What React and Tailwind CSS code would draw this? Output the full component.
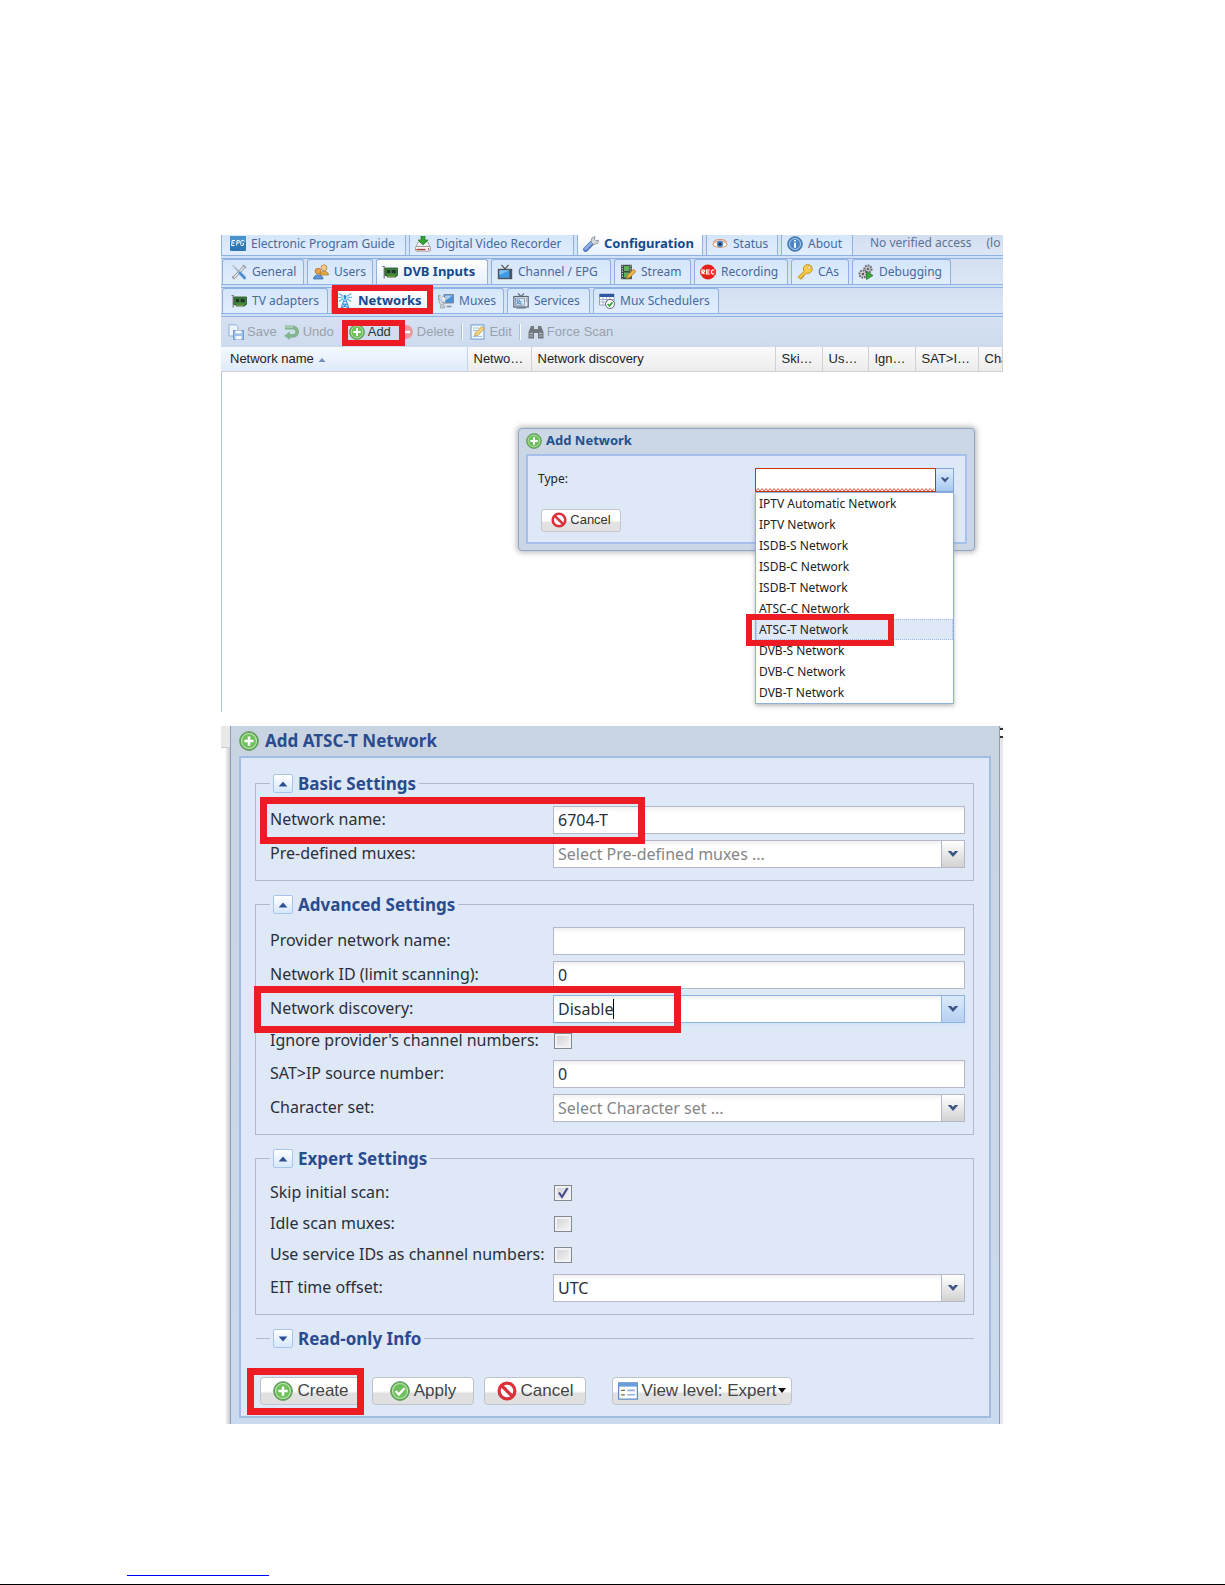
import React, { useState } from 'react';

const svg = (children) => function Icon({ className = 'w-4 h-4' }) {
  return (
    <svg viewBox="0 0 16 16" className={`shrink-0 ${className}`} aria-hidden="true">
      {children}
    </svg>
  );
};

const IconEpg = svg(<>
  <rect x="0" y="0" width="16" height="15" rx="1" fill="#2f78b8" />
  <rect x="0" y="0" width="16" height="6" rx="1" fill="#4a93cf" />
  <path d="M5 4.500H2.200L1.500 9.500h3M2 7h2.500M6.500 9.500l.7-5h2l.6 1.200-1 1.300H7M14.500 5.500l-1-1h-1.700l-.8 1-.4 3 .8 1h1.700l.6-2.200h-1.200" fill="none" stroke="#fff" strokeWidth="1" />
</>);
const IconDvr = svg(<>
  <path d="M1 11l2-5h10l2 5z" fill="#eceef0" stroke="#8b8f95" strokeWidth=".7" />
  <rect x=".6" y="10.500" width="14.800" height="4.600" rx=".8" fill="#f4f4f4" stroke="#888" strokeWidth=".8" />
  <path d="M1.500 13.500h9" stroke="#b03a3a" strokeWidth="1.300" />
  <path d="M13 13h1" stroke="#b22" strokeWidth="1.500" />
  <path d="M6 0h4v4h3L8 9 3 4h3z" fill="#35a435" stroke="#1d7a1d" strokeWidth=".7" />
</>);
const IconWrench = svg(<>
  <path d="M2.600 13.400L8.500 7.500" stroke="#5578bd" strokeWidth="5" strokeLinecap="round" />
  <path d="M2.500 12.900L8.200 7.200" stroke="#8fb0e6" strokeWidth="2.600" strokeLinecap="round" />
  <path d="M8 6L8.800 2.200 12 .5l-.4 2.900L13 4.900l2.800-.7L14.500 7.500 10.500 8.500z" fill="#d3d6db" stroke="#84898f" strokeWidth=".8" />
</>);
const IconEye = svg(<>
  <path d="M.8 8.500C3 4 13 4 15.200 8.500 13 12.500 3 12.500.8 8.500z" fill="#fff" stroke="#dba486" strokeWidth="1.200" />
  <circle cx="8" cy="8" r="3.200" fill="#4c83bd" />
  <circle cx="8" cy="8" r="1.500" fill="#16314f" />
  <path d="M1 6C4 2.500 12 2.500 15 6" fill="none" stroke="#d99170" />
</>);
const IconInfo = svg(<>
  <circle cx="8" cy="8" r="7.300" fill="#4b87c4" stroke="#2e659f" strokeWidth=".8" />
  <circle cx="8" cy="8" r="5.500" fill="none" stroke="#b8d4ee" strokeWidth=".9" />
  <path d="M8 4v1.600M8 6.800v5" stroke="#fff" strokeWidth="1.900" />
</>);
const IconTools = svg(<>
  <path d="M3 13.500L13 3" stroke="#8e9399" strokeWidth="3" strokeLinecap="round" />
  <path d="M3 13.500L13 3" stroke="#e8eaec" strokeWidth="1.500" strokeLinecap="round" />
  <path d="M12 1l3 3M1 12.500L3.500 15" stroke="#9ba0a6" strokeWidth="1.600" />
  <path d="M2 1.500L9 9" stroke="#9aa6b3" strokeWidth="1.300" />
  <path d="M9 9l4.500 4.800" stroke="#4f8fd0" strokeWidth="3" strokeLinecap="round" />
  <path d="M1 1l3 .8L5 4 3 4.500z" fill="#c5cad0" />
</>);
const IconUsers = svg(<>
  <circle cx="11" cy="3.800" r="3" fill="#f3c98b" stroke="#b27a2c" strokeWidth=".7" />
  <path d="M7 11c0-5 8.500-5 8.500 0z" fill="#e0a93c" stroke="#a9761d" strokeWidth=".7" />
  <circle cx="5" cy="7.200" r="2.900" fill="#e8a24c" stroke="#a9641d" strokeWidth=".7" />
  <path d="M.5 15c0-5.500 9.500-5.500 9.500 0z" fill="#5d97da" stroke="#2f62a0" strokeWidth=".7" />
</>);
const IconCard = svg(<>
  <path d="M.5 2.500h1.700v12" fill="none" stroke="#777" strokeWidth="1.200" />
  <path d="M3 4h12.500v7.500H14V13H5v-1.500H3z" fill="#3e8a3c" stroke="#1f4f20" strokeWidth=".8" />
  <path d="M4.800 5.800h3.500v3.500H4.800zM9.600 5.800h4.200v3.500H9.600z" fill="#23352a" />
  <path d="M5.500 12.300h8" stroke="#e0c14a" strokeWidth="1" strokeDasharray="1 1" />
</>);
const IconTv = svg(<>
  <path d="M4.500.8L8 5l3.500-4.200" fill="none" stroke="#555" strokeWidth="1.200" />
  <rect x=".8" y="4.800" width="14.400" height="10.400" fill="#4d5358" />
  <rect x="2.400" y="6.200" width="10" height="7.600" fill="#3f9be8" />
  <path d="M2.400 6.200h10L2.400 11z" fill="#7fc0f5" />
</>);
const IconStream = svg(<>
  <path d="M1 .8h11v14.400H1z" fill="#3c4a44" />
  <path d="M4 2h5.500v5H4zM4 8.500h5.500v5H4z" fill="#63b05c" />
  <path d="M2.300 1.500v13M10.900 1.500v13" stroke="#dfe4df" strokeWidth="1.100" strokeDasharray="1.300 1.200" />
  <path d="M6.500 15l1-3.700 6-6 2.300 2.200-6 6z" fill="#f0b545" stroke="#a86d18" strokeWidth=".8" />
</>);
const IconRec = svg(<>
  <circle cx="8" cy="8" r="7.600" fill="#e32119" />
  <path d="M0 5.400h16v5.200H0z" fill="#ee3a30" />
  <path d="M2 10V6h2l.5 1-.5 1H2l2.500 2M9.800 6H6.600v4h3.200M6.600 8h2.600M14.200 6h-1.700l-1 1v2l1 1h1.700" fill="none" stroke="#fff" strokeWidth="1.100" />
</>);
const IconKey = svg(<>
  <path d="M8 8.500L2 14.300" stroke="#bd8a17" strokeWidth="3.800" />
  <circle cx="10.800" cy="5" r="4.400" fill="#f7cf46" stroke="#bd8a17" strokeWidth=".9" />
  <path d="M8.500 8L2.300 14" stroke="#f7cf46" strokeWidth="2.200" />
  <circle cx="12.200" cy="3.600" r="1.400" fill="#fff" stroke="#bd8a17" strokeWidth=".6" />
  <path d="M4 13.500l1.500 1.300M5.500 12l1.600 1.400" stroke="#bd8a17" />
</>);
const IconDebug = svg(<>
  <circle cx="10" cy="5" r="3.600" fill="#bfc0c6" stroke="#6d6b75" strokeWidth="2" strokeDasharray="1.700 1" />
  <circle cx="5" cy="10" r="3.600" fill="#d0d1d6" stroke="#6d6b75" strokeWidth="2" strokeDasharray="1.700 1" />
  <circle cx="5" cy="10" r="1.200" fill="#555" />
  <circle cx="10" cy="5" r="1.100" fill="#555" />
  <path d="M8.500 7.500l6.500 4-6.500 4z" fill="#3aa83a" stroke="#1d6f1f" strokeWidth=".7" />
</>);
const IconMast = svg(<>
  <path d="M8 4L4 15.500M8 4l4 11.500M6.700 8.500h2.600M5.800 11l5.500 4M10.200 11l-5.500 4M5.800 11h4.400" fill="none" stroke="#3d9ade" strokeWidth="1.100" />
  <circle cx="8" cy="3.500" r="1.500" fill="#2c82c9" />
  <path d="M1.500.5L6 3M1 4.500l4.500-.3M2 8.500L6 5.500M14.500.5L10 3M15 4.500l-4.500-.3M14 8.500l-4-3" fill="none" stroke="#58b0ea" strokeWidth="1.100" />
</>);
const IconMux = svg(<>
  <path d="M6 1.500h9.500v8.500H6z" fill="#4a90d9" stroke="#7b8894" strokeWidth="1" />
  <path d="M7 2.500h7.500L7 8z" fill="#a5d0f5" />
  <path d="M8.500 13.500h5" stroke="#8a939c" strokeWidth="1.600" />
  <path d="M.5 2c0 4 2 7 6 8.500L3 12C1 10 0 5 .5 2z" fill="#dfe3e8" stroke="#8d949c" strokeWidth=".7" />
  <path d="M.8 2L6.500 10.500 8 5z" fill="#eef1f4" stroke="#9ba2aa" strokeWidth=".6" />
  <path d="M3 12l-1 3h5l-1.500-4" fill="#c6ccd3" stroke="#8d949c" strokeWidth=".6" />
</>);
const IconServices = svg(<>
  <path d="M5 .5L8 3.500l3-3" fill="none" stroke="#5c6a7a" strokeWidth="1.100" />
  <rect x=".8" y="3.500" width="14.400" height="10.500" fill="#e7ecf2" stroke="#596675" strokeWidth="1.200" />
  <rect x="2.600" y="5.200" width="9" height="7" fill="#d4e4f4" stroke="#70869e" strokeWidth=".7" />
  <path d="M4 6.500c0 3 2 4.500 4.500 4.500M6 6.500c0 1.500 1 2.500 2.500 2.500M3.500 11l3-2.500" fill="none" stroke="#2e6cae" />
  <path d="M13.300 5.500v4" stroke="#596675" strokeDasharray="1 1" />
  <path d="M3.500 15h9" stroke="#596675" />
</>);
const IconSched = svg(<>
  <path d="M.5 1h14.500v11H.5z" fill="#fff" stroke="#7b91b3" strokeWidth=".8" />
  <path d="M.5 1h14.500v3H.5z" fill="#2c55a4" />
  <path d="M1 6.500h14M1 9h14M4 4v8M7.500 4v8M11 4v8" stroke="#8fa5c6" strokeWidth=".8" />
  <circle cx="11" cy="11" r="4.500" fill="#fff" stroke="#667" strokeWidth="1" />
  <path d="M8.800 11l1.800 2 2.800-3.800" fill="none" stroke="#34a534" strokeWidth="1.700" />
</>);
const IconSave = svg(<>
  <path d="M1 .8h7l2 2V12H1z" fill="#eef5fc" stroke="#8fb0d6" strokeWidth="1" />
  <path d="M5.500 6.500h10v9h-10z" fill="#9dc0e8" stroke="#6f98cc" strokeWidth="1" />
  <path d="M7.500 6.500h6v3h-6zM7.500 12h6v3.500h-6z" fill="#f3f8fd" />
</>);
const IconUndo = svg(<>
  <path d="M1 3.500h8a4.200 4.200 0 0 1 0 8.400H4" fill="none" stroke="#84b591" strokeWidth="3.800" />
  <path d="M1.500 3h7.500" stroke="#b4d4bb" strokeWidth="1.400" />
  <path d="M6 7.500v8.500L0 11.800z" fill="#84b591" />
</>);
const IconAdd = svg(<>
  <circle cx="8" cy="8" r="7.500" fill="#4fa544" stroke="#6f9d68" strokeWidth=".8" />
  <circle cx="8" cy="8" r="6" fill="#6fc05d" stroke="#c4e6bb" strokeWidth=".9" />
  <path d="M8 4.300v7.400M4.300 8h7.400" stroke="#fff" strokeWidth="2" />
</>);
const IconDelete = svg(<>
  <circle cx="8" cy="8" r="7" fill="#e89a9c" />
  <path d="M4 8h8" stroke="#fff" strokeWidth="2.400" />
</>);
const IconEdit = svg(<>
  <path d="M1 .8h13v14.400H1z" fill="#f2f7fc" stroke="#7fa9d8" strokeWidth="1.200" />
  <path d="M3 4h6M3 6.500h4M3 12.500h9" stroke="#a9c5e5" />
  <path d="M4.500 12l.8-3.200L12 2.500l2.600 2.300-6.800 6.400z" fill="#f0d27c" stroke="#b79c55" strokeWidth=".8" />
</>);
const IconScan = svg(<>
  <path d="M3 2h3v3h4V2h3l2.500 6v6.500H10V9H6v5.500H.5V8z" fill="#72777d" />
  <path d="M1.500 9.500h3.500M11 9.500h3.500M1.500 12h3.500M11 12h3.500" stroke="#b9bfc6" />
</>);
const IconCancel = svg(<>
  <circle cx="8" cy="8" r="6.300" fill="#fff" stroke="#d9323a" strokeWidth="2.600" />
  <path d="M3.800 3.800l8.400 8.400" stroke="#d9323a" strokeWidth="2.600" />
</>);
const IconApply = svg(<>
  <circle cx="8" cy="8" r="7.500" fill="#4fa544" stroke="#6f9d68" strokeWidth=".8" />
  <circle cx="8" cy="8" r="6" fill="#6fc05d" stroke="#c4e6bb" strokeWidth=".9" />
  <path d="M4.500 8l2.600 2.800 4.500-5" fill="none" stroke="#fff" strokeWidth="2" />
</>);
const IconView = svg(<>
  <rect x=".5" y="1.500" width="15" height="13" fill="#fff" stroke="#5d8cc4" strokeWidth="1" />
  <path d="M.5 1.500h15v3H.5z" fill="#6a9edb" />
  <path d="M2.500 7.500h3M2.500 11h3" stroke="#666" />
  <path d="M7.500 7.500h6M7.500 11h6" stroke="#8eb0da" strokeWidth="1.300" />
</>);
const Chevron = svg(<path d="M1 4h4.500L8 6.800 10.500 4H15l-7 8z" fill="#3c5585" />);
const TriangleUp = svg(<path d="M8 4l7 8H1z" fill="#2f4f93" />);
const TriangleDown = svg(<path d="M8 12l7-8H1z" fill="#2f4f93" />);

const MAIN_TABS = [
  { label: 'Electronic Program Guide', icon: IconEpg,    width: 'w-[185px]' },
  { label: 'Digital Video Recorder',   icon: IconDvr,    width: 'w-[165px]' },
  { label: 'Configuration',            icon: IconWrench, width: 'w-[126px]', active: true },
  { label: 'Status',                   icon: IconEye,    width: 'w-[72px]' },
  { label: 'About',                    icon: IconInfo,   width: 'w-[72px]' },
];

const CONFIG_TABS = [
  { label: 'General',       icon: IconTools,  width: 'w-[82px]' },
  { label: 'Users',         icon: IconUsers,  width: 'w-[66px]' },
  { label: 'DVB Inputs',    icon: IconCard,   width: 'w-[112px]', active: true },
  { label: 'Channel / EPG', icon: IconTv,     width: 'w-[120px]' },
  { label: 'Stream',        icon: IconStream, width: 'w-[77px]' },
  { label: 'Recording',     icon: IconRec,    width: 'w-[94px]' },
  { label: 'CAs',           icon: IconKey,    width: 'w-[58px]' },
  { label: 'Debugging',     icon: IconDebug,  width: 'w-[99px]' },
];

const INPUT_TABS = [
  { label: 'TV adapters',    icon: IconCard,     width: 'w-[106px]' },
  { label: 'Networks',       icon: IconMast,     width: 'w-[98px]', active: true, marked: true },
  { label: 'Muxes',          icon: IconMux,      width: 'w-[72px]' },
  { label: 'Services',       icon: IconServices, width: 'w-[83px]' },
  { label: 'Mux Schedulers', icon: IconSched,    width: 'w-[126px]' },
];

const COLUMNS = [
  { label: 'Network name',      width: 'w-[246px]', sorted: true },
  { label: 'Netwo…',            width: 'w-[64px]' },
  { label: 'Network discovery', width: 'w-[244px]' },
  { label: 'Ski…',              width: 'w-[47px]' },
  { label: 'Us…',               width: 'w-[46px]' },
  { label: 'Ign…',              width: 'w-[47px]' },
  { label: 'SAT>I…',            width: 'w-[63px]' },
  { label: 'Cha',               width: '' },
];

const NETWORK_TYPES = [
  'IPTV Automatic Network', 'IPTV Network', 'ISDB-S Network', 'ISDB-C Network', 'ISDB-T Network',
  'ATSC-C Network', 'ATSC-T Network', 'DVB-S Network', 'DVB-C Network', 'DVB-T Network',
];

// red highlight frame laid over a control
function Mark({ className }) {
  return <span aria-hidden="true" className={`absolute z-20 pointer-events-none border-[#ed1c24] ${className}`} />;
}

function TabStrip({ tabs, first, children }) {
  return (
    <div className="border-b border-[#8fb2e3]">
      <div className={`flex gap-[3px] border-b border-[#8db2e3] bg-gradient-to-b from-[#d3dff0] to-[#dce6f5] ${first ? 'h-[21px]' : 'h-[26px] pl-px'}`}>
        {tabs.map(({ label, icon: Icon, width, active, marked }, i) => (
          <div key={label} className={`relative shrink-0 ${width}`}>
            <button
              type="button"
              className={`w-full h-full flex items-center gap-[5px] border-x border-[#8db2e3] whitespace-nowrap ${i === 0 ? 'pl-2' : 'pl-[5px]'} ${
                first ? 'pb-[3px]' : 'border-t rounded-t-[3px]'
              } ${
                active
                  ? 'bg-gradient-to-b from-white to-[#e6f0fd] text-[#15498b] font-bold text-[13px]'
                  : 'bg-gradient-to-b from-[#d6e6fa] to-[#e0edfd] text-[#47699b] text-xs'
              }`}
            >
              <Icon />
              {label}
            </button>
            {marked && <Mark className="border-[6px] -top-[3px] left-px w-[101px] h-[29px]" />}
          </div>
        ))}
        {children}
      </div>
      <div className="h-[2px] bg-[#cfe0f7]" />
    </div>
  );
}

function ToolButton({ icon: Icon, label, disabled, className = '', children }) {
  return (
    <button
      type="button"
      disabled={disabled}
      className={`relative flex items-center gap-[3px] whitespace-nowrap ${disabled ? 'text-[#9aa1ab]' : 'text-[#333]'} ${className}`}
    >
      <Icon />
      {label}
      {children}
    </button>
  );
}

function NetworksPanel() {
  const [type, setType] = useState('ATSC-T Network');

  return (
    <section className="overflow-hidden bg-white font-['Noto_Sans',sans-serif] text-xs">
      <TabStrip tabs={MAIN_TABS} first>
        <span className="pl-[14px] text-[#5b7396] whitespace-nowrap leading-4">No verified access</span>
        <span className="pl-3 text-[#5b7396] whitespace-nowrap leading-4">(lo</span>
      </TabStrip>
      <TabStrip tabs={CONFIG_TABS} />
      <TabStrip tabs={INPUT_TABS} />

      <div className="h-[30px] flex items-center gap-[7px] pl-[7px] bg-gradient-to-b from-[#d5e1f2] to-[#cddbee] font-['Liberation_Sans',sans-serif] text-[13px]">
        <ToolButton icon={IconSave} label="Save" disabled />
        <ToolButton icon={IconUndo} label="Undo" disabled />
        <ToolButton icon={IconAdd} label="Add" className="ml-2">
          <Mark className="border-[6px] -top-[3px] -left-[7px] w-[63px] h-[26px]" />
        </ToolButton>
        <ToolButton icon={IconDelete} label="Delete" disabled />
        <span className="w-[2px] h-4 border-l border-[#a9bfdd] bg-white" />
        <ToolButton icon={IconEdit} label="Edit" disabled />
        <span className="w-[2px] h-4 border-l border-[#a9bfdd] bg-white" />
        <ToolButton icon={IconScan} label="Force Scan" disabled />
      </div>

      <table className="w-full table-fixed font-['Liberation_Sans',sans-serif] text-[13px] text-[#222]">
        <thead>
          <tr className="h-6 border-b border-[#d0d0d0]">
            {COLUMNS.map(({ label, width, sorted }) => (
              <th
                key={label}
                className={`${width} text-left font-normal whitespace-nowrap overflow-hidden border-r ${
                  sorted
                    ? 'pl-[9px] border-[#c3d5ed] bg-gradient-to-b from-[#f3f8fe] to-[#dfebfa]'
                    : 'pl-[6px] border-[#d0d0d0] bg-gradient-to-b from-[#fafafa] to-[#ececee]'
                }`}
              >
                {label}
                {sorted && <TriangleUp className="inline w-2 h-2 ml-1 opacity-60" />}
              </th>
            ))}
          </tr>
        </thead>
      </table>

      <div className="min-h-[340px] border-l border-[#a9c4e8] pl-[296px] pr-7 pt-14">
        <div className="border border-[#8fa6c8] rounded-[4px] bg-[#ccd7e6] px-[7px] pb-[6px] shadow-[0_0_5px_2px_rgba(120,120,120,0.45)]">
          <h2 className="h-[25px] flex items-center gap-1 text-[13px] font-bold text-[#24508f]">
            <IconAdd />
            Add Network
          </h2>
          <div className="border-2 border-[#a5c0ea] bg-[#dfe8f6] h-[90px] pt-[12px] pl-[10px] pr-[11px]">
            <div className="flex items-center h-6">
              <label htmlFor="type" className="flex-1 pb-[2px] text-[#222]">Type:</label>
              <div className="relative w-[199px] h-6 flex">
                <div className="relative flex-1 min-w-0">
                  <input id="type" role="combobox" aria-expanded="true" aria-controls="type-list" className="w-full h-full bg-white border border-[#cc3300] px-1 outline-none" />
                  <svg className="absolute left-px bottom-px w-[178px] h-[3px]" aria-hidden="true">
                    <defs>
                      <pattern id="squiggle" width="4" height="3" patternUnits="userSpaceOnUse">
                        <path d="M0 3l2-2.500L4 3" fill="none" stroke="#d8452e" strokeWidth=".9" />
                      </pattern>
                    </defs>
                    <rect width="178" height="3" fill="url(#squiggle)" />
                  </svg>
                </div>
                <button type="button" aria-label="Open type list" className="w-[18px] flex items-center justify-center border border-l-0 border-[#7fa8d9] bg-gradient-to-b from-[#dcebfb] to-[#a9c9ef]">
                  <Chevron className="w-[10px] h-[10px]" />
                </button>
                <ul id="type-list" role="listbox" className="absolute z-10 top-6 left-0 w-[199px] border border-[#8fb0dc] bg-white shadow-[0_2px_4px_rgba(120,120,120,0.5)]">
                  {NETWORK_TYPES.map((name) => (
                    <li
                      key={name}
                      role="option"
                      aria-selected={name === type}
                      onClick={() => setType(name)}
                      className={`relative h-[21px] pl-[2px] leading-5 text-[#222] border border-dotted ${
                        name === type ? 'bg-[#dfe8f6] border-[#a3bae9]' : 'border-white'
                      }`}
                    >
                      {name}
                      {name === 'ATSC-T Network' && <Mark className="border-[6px] -top-[6px] -left-[11px] w-[148px] h-[32px]" />}
                    </li>
                  ))}
                </ul>
              </div>
            </div>
            <button type="button" className="mt-[17px] ml-[3px] w-[80px] h-[23px] flex items-center justify-center gap-[3px] rounded-[3px] border border-[#c3c6cc] bg-gradient-to-b from-white from-50% to-[#e2e2e2] to-60% font-['Liberation_Sans',sans-serif] text-[13px] text-[#333]">
              <IconCancel />
              Cancel
            </button>
          </div>
        </div>
      </div>
    </section>
  );
}

const BOX = 'w-full h-7 px-1 border bg-gradient-to-b from-[#f0f0f2] to-white to-20% outline-none';

function Row({ id, label, short, mark, children }) {
  return (
    <div className={`relative flex items-center ${short ? 'h-[25px]' : 'h-7'}`}>
      <label htmlFor={id} className="w-[283px] shrink-0 pb-[2px] whitespace-nowrap">{label}</label>
      <div className="relative flex-1 min-w-0 flex">{children}</div>
      {mark && <Mark className={mark} />}
    </div>
  );
}

function TextRow({ id, label, value, mark }) {
  return (
    <Row id={id} label={label} mark={mark}>
      <input id={id} type="text" defaultValue={value} className={`${BOX} border-[#b5b8c8]`} />
    </Row>
  );
}

function SelectRow({ id, label, value, empty, focused, mark }) {
  return (
    <Row id={id} label={label} mark={mark}>
      <select
        id={id}
        className={`${BOX} appearance-none ${focused ? 'border-[#8db4e3] shadow-[0_2px_2px_#d2e5fa]' : 'border-[#b5b8c8]'} ${empty ? 'text-[#868686]' : ''}`}
      >
        <option>{value}</option>
      </select>
      {focused && <span aria-hidden="true" className="absolute left-[60px] top-1 w-px h-5 bg-black" />}
      <span
        aria-hidden="true"
        className={`absolute right-px top-px w-[23px] h-[26px] flex items-center justify-center border-l pointer-events-none bg-gradient-to-b ${
          focused ? 'border-[#8db4e3] from-[#dcebfb] to-[#b5cff0]' : 'border-[#b5b8c8] from-white to-[#d2d2d2]'
        }`}
      >
        <Chevron className="w-3 h-3" />
      </span>
    </Row>
  );
}

function CheckRow({ id, label, checked }) {
  const [on, setOn] = useState(!!checked);
  return (
    <Row id={id} label={label} short>
      <span className="relative ml-px w-[18px] h-4">
        <input
          id={id}
          type="checkbox"
          checked={on}
          onChange={(e) => setOn(e.target.checked)}
          className="block appearance-none w-[18px] h-4 border border-[#85888e] bg-gradient-to-br from-[#cfd0d3] to-[#f8f8f8] shadow-[inset_0_0_0_2px_#f1f2f5]"
        />
        {on && (
          <svg viewBox="0 0 16 16" className="absolute left-px top-0 w-4 h-4 pointer-events-none" aria-hidden="true">
            <path d="M4 7.500l3 4.500 5.500-9" fill="none" stroke="#4b4f8f" strokeWidth="2.200" />
          </svg>
        )}
      </span>
    </Row>
  );
}

function FieldGroup({ title, collapsed, children }) {
  const Arrow = collapsed ? TriangleDown : TriangleUp;
  return (
    <fieldset className={`pl-[14px] pr-2 border-[#b5b8c8] ${collapsed ? 'border-t ml-px' : 'border pb-3'}`}>
      <legend className="h-5 flex items-center gap-[5px] px-[3px] text-[17px] leading-5 font-bold text-[#2b4b8f]">
        <button
          type="button"
          aria-label={`Toggle ${title}`}
          className="w-5 h-[19px] flex items-center justify-center rounded-[2px] border border-[#a9c4e8] bg-gradient-to-b from-white to-[#d5e8fc]"
        >
          <Arrow className="w-[10px] h-[10px]" />
        </button>
        {title}
      </legend>
      {!collapsed && <div className="pt-3 flex flex-col gap-[6px]">{children}</div>}
    </fieldset>
  );
}

function PushButton({ icon: Icon, label, width = 'w-[102px]', children }) {
  return (
    <button
      type="button"
      className={`relative ${width} h-7 flex items-center justify-center gap-1 rounded-[4px] border border-[#bfc3ca] bg-gradient-to-b from-white from-50% to-[#e0e0e0] to-60% font-['Liberation_Sans',sans-serif] text-[17px] text-[#444] whitespace-nowrap`}
    >
      <Icon className="w-5 h-5" />
      {label}
      {children}
    </button>
  );
}

function AddNetworkDialog() {
  return (
    <section className="flex overflow-hidden font-['Noto_Sans',sans-serif] text-base leading-5 text-[#2b2f38]">
      <div className="w-[9px] shrink-0 bg-gradient-to-r from-white from-40% to-[#c9cacd]">
        <div className="h-[22px] border-b border-[#cfcfcf] bg-[#e9e9ea]" />
      </div>

      <div className="flex-1 min-w-0 border-x border-[#8b9dbb] bg-gradient-to-b from-[#c9d4e2] to-[#cbdaee] px-2 pb-[6px]">
        <h2 className="h-[30px] flex items-center gap-[6px] text-[17px] font-bold text-[#2b4b8f]">
          <IconAdd className="w-5 h-5" />
          Add ATSC-T Network
        </h2>
        <form className="border-2 border-[#a3bce4] bg-[#dfe8f6] pt-4 pl-[14px] pr-[15px] pb-[11px]" onSubmit={(e) => e.preventDefault()}>
          <div className="flex flex-col gap-[14px]">
            <FieldGroup title="Basic Settings">
              <TextRow id="name" label="Network name:" value="6704-T" mark="border-[7px] -left-[10px] -top-[9px] w-[385px] h-[47px]" />
              <SelectRow id="muxes" label="Pre-defined muxes:" value="Select Pre-defined muxes ..." empty />
            </FieldGroup>
            <FieldGroup title="Advanced Settings">
              <TextRow id="provider" label="Provider network name:" value="" />
              <TextRow id="nid" label="Network ID (limit scanning):" value="0" />
              <SelectRow id="discovery" label="Network discovery:" value="Disable" focused mark="border-[7px] -left-[16px] -top-[9px] w-[427px] h-[47px]" />
              <CheckRow id="ignore" label="Ignore provider's channel numbers:" />
              <TextRow id="satip" label="SAT>IP source number:" value="0" />
              <SelectRow id="charset" label="Character set:" value="Select Character set ..." empty />
            </FieldGroup>
            <FieldGroup title="Expert Settings">
              <CheckRow id="skip" label="Skip initial scan:" checked />
              <CheckRow id="idle" label="Idle scan muxes:" />
              <CheckRow id="sid" label="Use service IDs as channel numbers:" />
              <SelectRow id="eit" label="EIT time offset:" value="UTC" />
            </FieldGroup>
            <FieldGroup title="Read-only Info" collapsed />
          </div>

          <div className="mt-7 pl-[5px] flex gap-[10px]">
            <PushButton icon={IconAdd} label="Create">
              <Mark className="border-[7px] -left-[14px] -top-[10px] w-[117px] h-[47px]" />
            </PushButton>
            <PushButton icon={IconApply} label="Apply" />
            <PushButton icon={IconCancel} label="Cancel" />
            <div className="ml-4">
              <PushButton icon={IconView} label="View level: Expert" width="w-[180px]">
                <svg viewBox="0 0 8 5" className="w-2 h-[5px] -ml-[2px]" aria-hidden="true">
                  <path d="M0 0h8L4 5z" fill="#111" />
                </svg>
              </PushButton>
            </div>
          </div>
        </form>
      </div>

      <div className="w-[3px] shrink-0 bg-[#e6e7ea]">
        <div className="mt-[2px] h-[10px] border-y-2 border-[#333] bg-white" />
      </div>
    </section>
  );
}

export default function App() {
  return (
    <div className="min-h-screen flex flex-col bg-white">
      <main className="pl-[221px] pr-[222px] pt-[235px] flex flex-col gap-[14px]">
        <NetworksPanel />
        <AddNetworkDialog />
      </main>
      <footer className="mt-auto border-b border-black">
        <a href="#top" aria-label="Back to top" className="block ml-[127px] mb-2 w-[142px] border-b border-[#0000ee]" />
      </footer>
    </div>
  );
}
